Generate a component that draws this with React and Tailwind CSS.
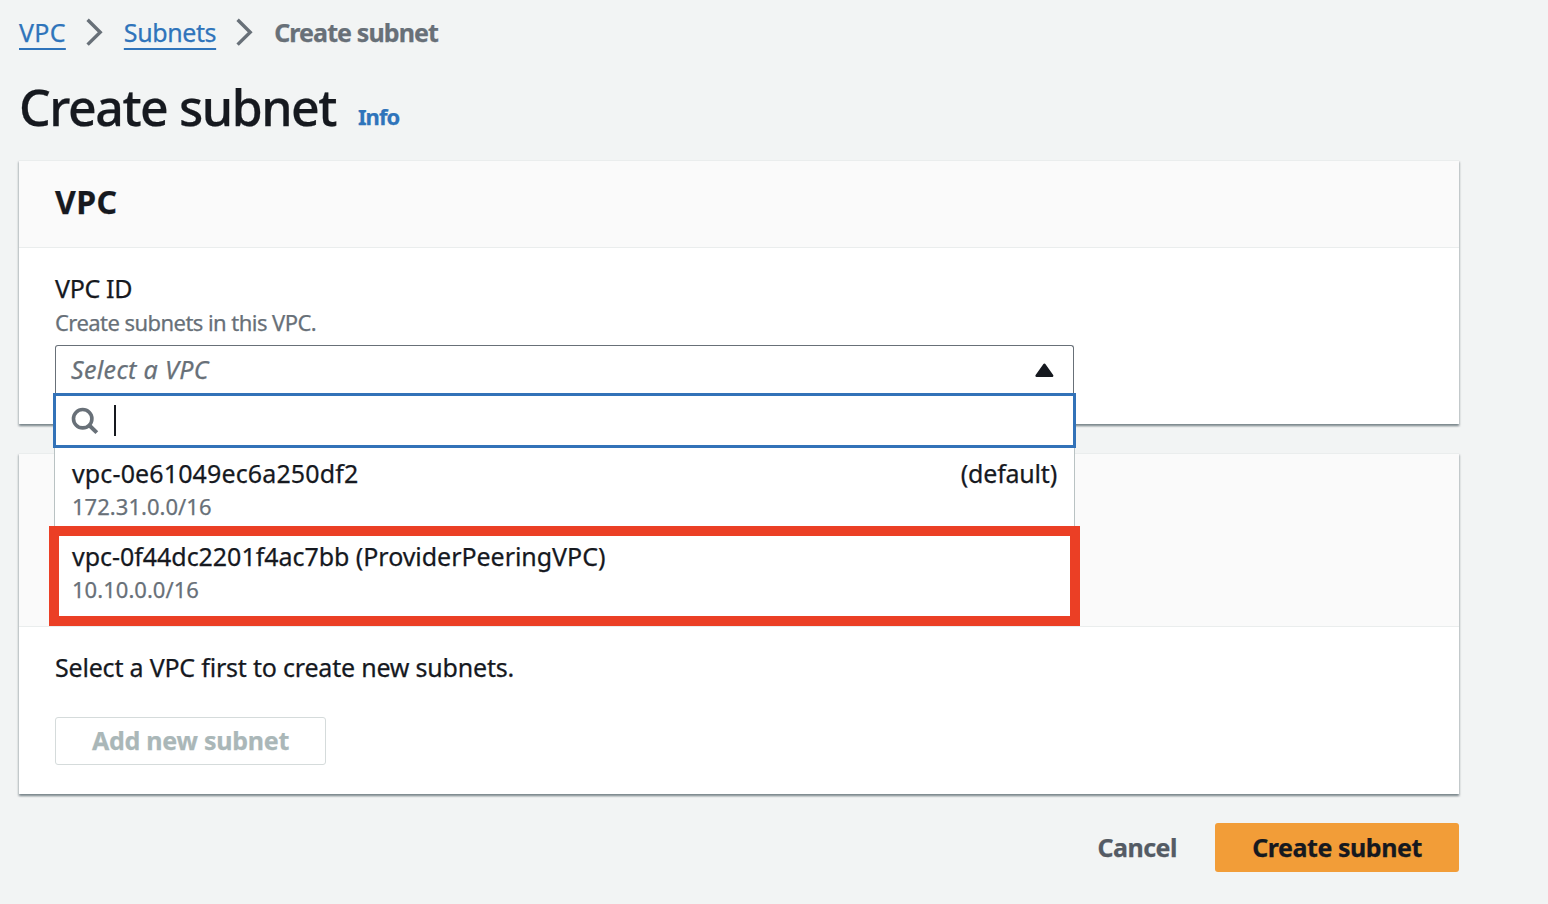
function Chevron() {
  return (
    <svg className="h-7 w-[18px] shrink-0" viewBox="0 0 18 28" fill="none" stroke="#687078" strokeWidth="3.4">
      <path d="M1.6 1.7 14.2 14.2 1.6 26.6" />
    </svg>
  );
}

function Card({ title, headerClass, bodyClass, children }) {
  return (
    <section className="border-t border-[#eaeded] bg-white shadow-[0_2px_2px_0_rgba(0,28,36,0.3),1px_2px_2px_0_rgba(0,28,36,0.15),-1px_2px_2px_0_rgba(0,28,36,0.15)]">
      <header className={`border-b border-[#eaeded] bg-[#fafafa] px-9 pt-[21px] ${headerClass}`}>
        {title && <h2 className="text-[32px] leading-10 font-bold tracking-[0.4px]">{title}</h2>}
      </header>
      <div className={`px-9 pt-[25px] ${bodyClass}`}>{children}</div>
    </section>
  );
}

function OptionText({ name, tag, cidr }) {
  return (
    <>
      <div className="flex justify-between leading-[30px]">
        <span>{name}</span>
        {tag && <span className="tracking-[-0.2px]">{tag}</span>}
      </div>
      <div className="mt-[3px] text-[22px] leading-[30px] tracking-[0.03px] text-[#687078]">{cidr}</div>
    </>
  );
}

function VpcSelect() {
  return (
    <div className="relative mt-2 w-[1019px]">
      <div className="flex h-[50px] items-start justify-between rounded-t-[3px] border border-b-0 border-[#687078] bg-white pt-2 pr-[19px] pl-[15px]">
        <span className="leading-[30px] tracking-[0.35px] text-[#687078] italic">Select a VPC</span>
        <svg className="mt-2 h-4 w-5" viewBox="0 0 20 16">
          <path d="M10.4 2.7 18.2 13.7H2.6Z" fill="#16191f" stroke="#16191f" strokeWidth="2.4" strokeLinejoin="round" />
        </svg>
      </div>
      <div className="absolute top-12 -right-0.5 -left-0.5 z-10">
        <div className="flex h-[55px] items-center border-[3px] border-[#3272b8] bg-white pl-[15px]">
          <svg className="h-7 w-7" viewBox="0 0 28 28" fill="none" stroke="#687078">
            <circle cx="11.7" cy="11.7" r="9.2" strokeWidth="3.6" />
            <path d="M18.2 18.2 25.8 25.6" strokeWidth="4" />
          </svg>
          <span className="ml-[15px] h-[31px] w-0.5 bg-[#16191f]" />
        </div>
        <div className="mx-px border-x border-[#b9c2c3] bg-white">
          <div className="h-[78px] pt-[10px] pr-[17px] pl-[17px] tracking-[0.13px]">
            <OptionText name="vpc-0e61049ec6a250df2" tag="(default)" cidr="172.31.0.0/16" />
          </div>
          <div className="-mx-1.5 h-[100px] border-[10px] border-[#eb3f25] bg-white pt-[5px] pl-[13px] tracking-[-0.04px]">
            <OptionText name="vpc-0f44dc2201f4ac7bb (ProviderPeeringVPC)" cidr="10.10.0.0/16" />
          </div>
        </div>
      </div>
    </div>
  );
}

export default function App() {
  return (
    <div className="h-[904px] w-[1548px] overflow-hidden bg-[#f2f4f4] pt-3 pl-[19px] font-['Noto_Sans',sans-serif] text-[25px] text-[#16191f] [-webkit-text-stroke-width:0.25px]">
      <div className="w-[1440px]">
        <nav className="flex h-10 items-center leading-10">
          <a className="tracking-[0.3px] text-[#2f74bb] underline decoration-2 underline-offset-[6px]">VPC</a>
          <span className="mr-5 ml-5 flex"><Chevron /></span>
          <a className="tracking-[-0.4px] text-[#2f74bb] underline decoration-2 underline-offset-[6px]">Subnets</a>
          <span className="mr-5 ml-5 flex"><Chevron /></span>
          <span className="font-bold tracking-[-0.9px] text-[#687078]">Create subnet</span>
        </nav>
        <div className="mt-[25px] flex h-[83px] items-baseline">
          <h1 className="text-[50px] leading-[60px] font-medium tracking-[-1.45px]">Create subnet</h1>
          <a className="relative -top-px ml-[22px] text-[22px] leading-[30px] font-bold tracking-[-1px] text-[#2f74bb]">Info</a>
        </div>
        <Card title="VPC" headerClass="h-[87px]" bodyClass="h-[176px]">
          <div className="leading-[30px] tracking-[-0.35px]">VPC ID</div>
          <div className="mt-1 text-[22px] leading-[30px] tracking-[-0.55px] text-[#687078]">Create subnets in this VPC.</div>
          <VpcSelect />
        </Card>
        <div className="h-[29px]" />
        <Card headerClass="h-[173px]" bodyClass="h-[167px]">
          <p className="leading-[30px] tracking-[-0.2px]">Select a VPC first to create new subnets.</p>
          <button className="mt-[35px] h-12 w-[271px] rounded-[3px] border border-[#d5dbdb] bg-white font-bold tracking-[-0.25px] text-[#aab7b8]">
            Add new subnet
          </button>
        </Card>
        <div className="mt-[29px] flex items-center justify-end gap-[38px]">
          <button className="font-bold tracking-[-0.5px] text-[#545b64]">Cancel</button>
          <button className="h-[49px] w-[244px] rounded-[3px] bg-[#f29d38] font-bold tracking-[-0.45px]">Create subnet</button>
        </div>
      </div>
    </div>
  );
}
